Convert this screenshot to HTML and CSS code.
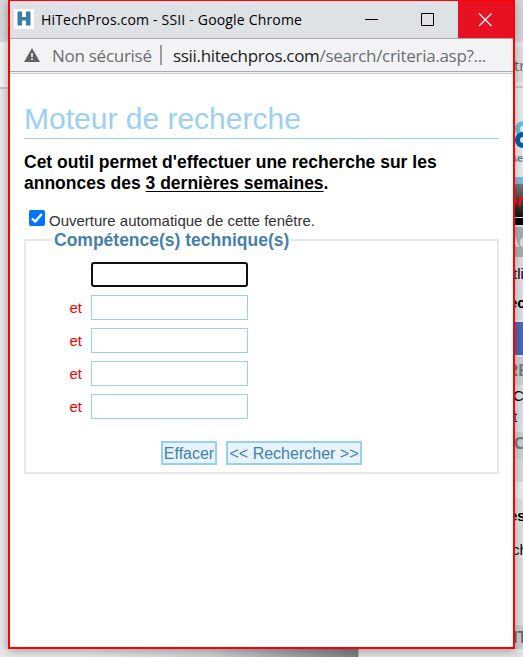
FILE: index.html
```html
<!DOCTYPE html>
<html lang="fr">
<head>
<meta charset="utf-8">
<title>HiTechPros.com - SSII</title>
<link rel="stylesheet" href="styles.css">
</head>
<body>
<div class="backdrop">
  <div class="back-left"><div class="back-tab"></div><div class="back-bar"></div></div>
  <div class="back-right">
    <div class="strip tabs"></div>
    <div class="strip address"><span>tr</span></div>
    <div class="strip logo">
      <svg width="10" height="35" viewBox="0 0 10 35"><path d="M0 4Q3 1 2 5L0 9" fill="#3293be"/><circle cx="10" cy="10" r="5.500" fill="none" stroke="#70bbd5" stroke-width="5"/><circle cx="10" cy="21" r="5.500" fill="none" stroke="#075ba5" stroke-width="5"/></svg>
      <b>se</b>
    </div>
    <div class="strip blue"></div>
    <div class="strip menu"><b>on</b></div>
    <div class="strip black"></div>
    <div class="strip news"><b>Ac</b></div>
    <div class="strip links"><span>tli</span><b>ec</b></div>
    <div class="strip action"></div>
    <div class="strip section"><b>RE</b></div>
    <div class="strip list"><span>C</span><span>t</span></div>
    <div class="strip section second"><b>C</b></div>
    <div class="strip pale"></div>
    <div class="strip gap"></div>
    <div class="strip more"><b>es</b><span>ch</span></div>
    <div class="strip last"><b>IT</b></div>
  </div>
  <div class="back-bottom"></div>
</div>
<div class="window">
  <header class="titlebar">
    <svg class="favicon" width="20" height="20" viewBox="0 0 20 20"><path fill="#fff" d="M0 0h20v20H0z"/><path fill="#3d7cab" d="M3.500 2.500h4.500v5.500h4V2.500h4.500v14H12v-5H8v5H3.500z"/></svg>
    <span class="caption">HiTechPros.com - SSII - Google Chrome</span>
    <span class="controls">
      <svg width="56" height="37" viewBox="0 0 56 37"><path d="M19 18.500h13" stroke="#000"/></svg>
      <svg width="56" height="37" viewBox="0 0 56 37"><path d="M19.500 12.500h12v12h-12z" fill="none" stroke="#000"/></svg>
      <svg class="close" width="55" height="37" viewBox="0 0 55 37"><path d="M21 12.500l12.500 12.500M33.500 12.500L21 25" stroke="#fff" stroke-width="1.200"/></svg>
    </span>
  </header>
  <div class="addressbar">
    <svg class="warning" width="16" height="14" viewBox="0 0 16 14"><path fill="#5f6368" d="M8 0l8 14H0z"/><path fill="#f1f3f4" d="M7.200 5h1.600v4H7.200zM7.200 10.300h1.600v1.700H7.200z"/></svg>
    <span class="unsafe">Non sécurisé</span>
    <i class="divider"></i>
    <span class="url"><span class="host">ssii.hitechpros.com</span><span class="path">/search/criteria.asp?...</span></span>
  </div>
  <div class="edge"></div>
  <main>
    <h1><span>Moteur de recherche</span></h1>
    <p class="intro">Cet outil permet d'effectuer une recherche sur les<br>annonces des <u>3 dernières semaines</u>.</p>
    <form>
      <label class="auto"><span class="check"><svg width="16" height="16" viewBox="0 0 16 16"><rect width="16" height="16" rx="2" fill="#0075ff"/><path d="M3 8.500l3.200 3L12.800 4" fill="none" stroke="#fff" stroke-width="2.300"/></svg></span><span class="auto-text">Ouverture automatique de cette fenêtre.</span></label>
      <fieldset>
        <legend>Compétence(s) technique(s)</legend>
        <div class="row"><span></span><input class="focused" type="text" aria-label="Compétence 1"></div>
        <div class="row"><span>et</span><input type="text" aria-label="Compétence 2"></div>
        <div class="row"><span>et</span><input type="text" aria-label="Compétence 3"></div>
        <div class="row"><span>et</span><input type="text" aria-label="Compétence 4"></div>
        <div class="row"><span>et</span><input type="text" aria-label="Compétence 5"></div>
        <div class="actions"><button type="reset" class="clear">Effacer</button><button type="button" class="search">&lt;&lt; Rechercher &gt;&gt;</button></div>
      </fieldset>
    </form>
  </main>
</div>
</body>
</html>
```
FILE: styles.css
```css
* { box-sizing: border-box; }
html, body { margin: 0; width: 523px; height: 657px; overflow: hidden; }
body { position: relative; font-family: "Liberation Sans", Arial, sans-serif; }
.backdrop { display: grid; grid-template: 649px 8px / 8px 505px 10px; background: #dedede; }
.back-left { background: linear-gradient(90deg, #e6e6e9, #dadade); }
.back-tab { height: 42px; background: linear-gradient(90deg, #d5d8dc, #cdd0d4); border-bottom-right-radius: 6px; }
.back-bar { height: 47px; background: linear-gradient(90deg, #f3f3f4, #e8e8e9); border-bottom: 2px solid #c6c6ca; }
.back-right { grid-column: 3; display: flex; flex-direction: column; min-width: 0; }
.strip { flex: none; overflow: hidden; white-space: nowrap; font-size: 15px; line-height: 18px; }
.strip b, .strip span { display: block; }
.tabs { height: 42px; background: #d0d3d7; }
.address { height: 46px; padding: 14px 0 0 1px; background: linear-gradient(#e5e5e5 5px, #d9dbdc 5px 40px, #e8e8e8 40px 44px, #c6c6ca 44px); font-family: "Open Sans", sans-serif; color: #646668; }
.logo { height: 89px; padding-top: 31px; background: #e8e8e8; font-size: 11px; color: #777; }
.logo svg { display: block; height: 35px; width: 10px; overflow: hidden; }
.logo b { line-height: 8px; height: 12px; margin-left: -2px; }
.blue { height: 7px; background: #83b7d8; }
.menu { height: 33px; padding-top: 7px; background: linear-gradient(#777, #111); border-top: 1px solid #777; color: #f00; }
.menu b { margin-left: -7px; font-size: 17px; }
.black { height: 10px; background: #000; border-top: 1px solid #ddd; border-bottom: 2px solid #ddd; }
.news { height: 30px; padding-top: 6px; background: #a9abad; color: #e3e3e3; font-size: 17px; }
.news b { margin-left: -6px; }
.links { height: 65px; padding-top: 8px; background: #dcdce0; border-bottom: 2px solid #e6e6e6; }
.links b { margin: 11px 0 0 -4px; }
.action { height: 33px; background: #5065ac; }
.section { height: 30px; padding-top: 5px; background: #cbcdce; border-top: 2px solid #e0e0e0; color: #777a7b; font-size: 17px; }
.section b { margin-left: -7px; }
.list { height: 45px; padding-top: 0; background: #dcdce0; }
.list span { line-height: 21px; }
.second { height: 29px; padding-top: 3px; }
.second b { margin-left: 1px; }
.pale { height: 23px; background: #d7d7d7; }
.gap { height: 17px; background: #e8e8e8; }
.more { height: 124px; padding-top: 8px; background: #dcdcdc; }
.more b { margin-left: -4px; }
.more span { margin: 16px 0 0 -1px; }
.last { height: 26px; padding-top: 4px; background: #c8cbcc; border-top: 2px solid #e0e0e0; color: #626b6d; font-size: 16px; }
.last b { margin-left: 0; }
.back-bottom { grid-column: 1 / 4; background: linear-gradient(90deg, #e8e8e9 0 80px, #d0d1d3 210px, #7c8184 358px, #e2e2e2 359px); }

.window { position: absolute; left: 8px; top: 0; width: 507px; height: 649px; display: flex; flex-direction: column; background: #fff; border: 2px solid #f00; border-top-width: 1px; box-shadow: 0 3px 8px rgba(0, 0, 0, .25); }
.titlebar { flex: none; height: 37px; display: flex; align-items: center; background: #dee1e6; font-family: "Open Sans", sans-serif; }
.favicon { margin-left: 4px; margin-top: -1px; }
.caption { margin-left: 7px; font-size: 14px; line-height: 20px; letter-spacing: .18px; white-space: nowrap; color: #000; }
.controls { display: flex; margin-left: auto; }
.close { background: #e81123; }
.addressbar { flex: none; height: 33px; display: flex; align-items: center; background: #f1f3f4; border-top: 1px solid #aaa; font-family: "Open Sans", sans-serif; font-size: 17px; color: #6b6e72; white-space: nowrap; }
.warning { margin-left: 14px; }
.unsafe { margin-left: 12px; width: 100px; letter-spacing: -.27px; }
.divider { width: 2px; height: 20px; margin-left: 8px; background: #9b9da0; }
.url { margin-left: 11px; letter-spacing: -.31px; }
.host { color: #202124; }
.edge { flex: none; height: 3px; background: #f5f5f5; border-top: 1px solid #aaa; border-bottom: 1px solid #ccc; }
main { padding: 26px 14px 0; }
h1 { margin: 0; height: 39px; border-bottom: 1px solid #99cff1; color: #9bd0f3; font-size: 30px; font-weight: 400; line-height: 37px; white-space: nowrap; }
.intro { margin: 13px 0 0; font-size: 17.500px; font-weight: 700; line-height: 21px; white-space: nowrap; color: #000; }
.intro u { text-underline-offset: 2px; }
.auto { display: flex; height: 24px; margin-top: 16px; padding-left: 5px; font-size: 15px; color: #333; }
.check { height: 16px; line-height: 0; }
.auto-text { margin: 2px 0 0 4px; line-height: 18px; white-space: nowrap; }
fieldset { margin: -5px 0 0; padding: 0; height: 245px; min-width: 0; border: 2px solid #e4e8e8; }
legend { margin-left: 26px; padding: 0 1px 0 2px; height: 21px; color: #457fac; font-size: 17.500px; font-weight: 700; line-height: 23px; white-space: nowrap; }
.row { height: 25px; display: flex; margin-top: 8px; }
legend + .row { margin-top: 12px; }
.row span { width: 56px; margin-right: 9px; text-align: right; color: #f00; font-size: 15px; line-height: 26px; }
input { width: 157px; height: 25px; padding: 2px; border: 1px solid #99cff1; border-radius: 0; outline: 0; background: #fff; }
input.focused { border: 2px solid #101010; border-radius: 3px; }
.actions { display: flex; gap: 9px; margin: 22px 0 0 135px; }
button { height: 24px; padding: 1px 0 0; border: 2px solid #99cff1; background: #e7f3fb; color: #457fac; font: 16px/20px "Liberation Sans", Arial, sans-serif; white-space: nowrap; }
.clear { width: 56px; }
.search { width: 136px; }
```
